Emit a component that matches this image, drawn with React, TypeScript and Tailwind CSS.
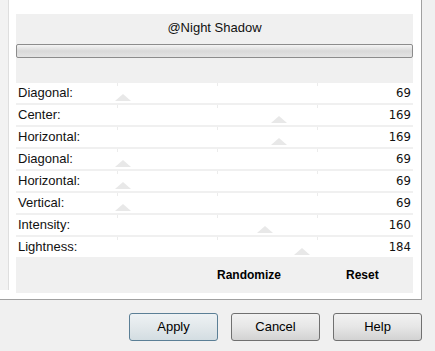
import React from 'react'

const rows: { label: string; value: number }[] = [
  { label: 'Diagonal:', value: 69 },
  { label: 'Center:', value: 169 },
  { label: 'Horizontal:', value: 169 },
  { label: 'Diagonal:', value: 69 },
  { label: 'Horizontal:', value: 69 },
  { label: 'Vertical:', value: 69 },
  { label: 'Intensity:', value: 160 },
  { label: 'Lightness:', value: 184 },
]

const font = { fontFamily: '"Liberation Sans", Arial, sans-serif' }

function SliderRow({ label, value }: { label: string; value: number }) {
  // thumb centre along the 397px track
  const x = Math.round((value / 255) * 397)
  return (
    <div className="relative flex h-[20px] items-center justify-between bg-white px-[2px] text-[13px] text-[#111]">
      {[101, 201, 301].map((t) => (
        <span key={t} className="absolute top-0 h-[3px] w-px bg-[#ececec]" style={{ left: t }} />
      ))}
      <svg className="absolute bottom-[2px]" width="16" height="7" style={{ left: x - 8 }}>
        <polygon points="0,7 8,0 16,7" fill="#e8e8e8" />
      </svg>
      <span className="relative">{label}</span>
      <span className="relative" style={{ fontFamily: '"Liberation Sans Narrow", "DejaVu Sans Condensed", sans-serif' }}>
        {value}
      </span>
    </div>
  )
}

function DlgButton({ label, primary }: { label: string; primary?: boolean }) {
  return (
    <button
      className={
        primary
          ? 'flex h-[28px] w-[89px] items-center justify-center rounded-[3px] border border-[#5b7f96] bg-gradient-to-b from-[#eef2f4] via-[#e2e8eb] to-[#d3dde2] text-[13px] text-black'
          : 'flex h-[28px] w-[89px] items-center justify-center rounded-[3px] border border-[#707070] bg-gradient-to-b from-[#f2f2f2] via-[#e6e6e6] to-[#d2d2d2] text-[13px] text-black'
      }
      style={font}
    >
      {label}
    </button>
  )
}

export default function App() {
  return (
    <div className="flex h-[351px] w-[435px] flex-col overflow-hidden bg-[#f0f0f0]" style={font}>
      <div className="flex h-[300px]">
        <div className="flex h-[300px] w-[422px] border-b border-r border-[#a0a0a0] bg-white">
          <div className="h-[290px] w-[9px] border-r border-[#dedede] bg-[#f2f2f2]" />
          <div className="ml-[7px] mt-[14px] flex h-[279px] w-[397px] flex-col bg-[#f0f0f0]">
            <div className="flex h-[28px] items-center justify-center text-[13px] text-[#111]">@Night Shadow</div>
            <div className="mt-[2px] h-[14px] rounded-[2px] border border-[#8c8c8c] bg-gradient-to-b from-[#f4f4f4] via-[#d9d9d9] to-[#e4e4e4]" />
            <div className="mt-[25px] flex flex-col gap-[2px]">
              {rows.map((r, i) => (
                <SliderRow key={i} label={r.label} value={r.value} />
              ))}
            </div>
            <div className="flex h-[36px] items-center text-[12px] font-bold text-black">
              <span className="ml-[201px]">Randomize</span>
              <span className="ml-[65px]">Reset</span>
            </div>
          </div>
        </div>
      </div>
      <div className="flex gap-[13px] pl-[129px] pt-[13px]">
        <DlgButton label="Apply" primary />
        <DlgButton label="Cancel" />
        <DlgButton label="Help" />
      </div>
    </div>
  )
}
